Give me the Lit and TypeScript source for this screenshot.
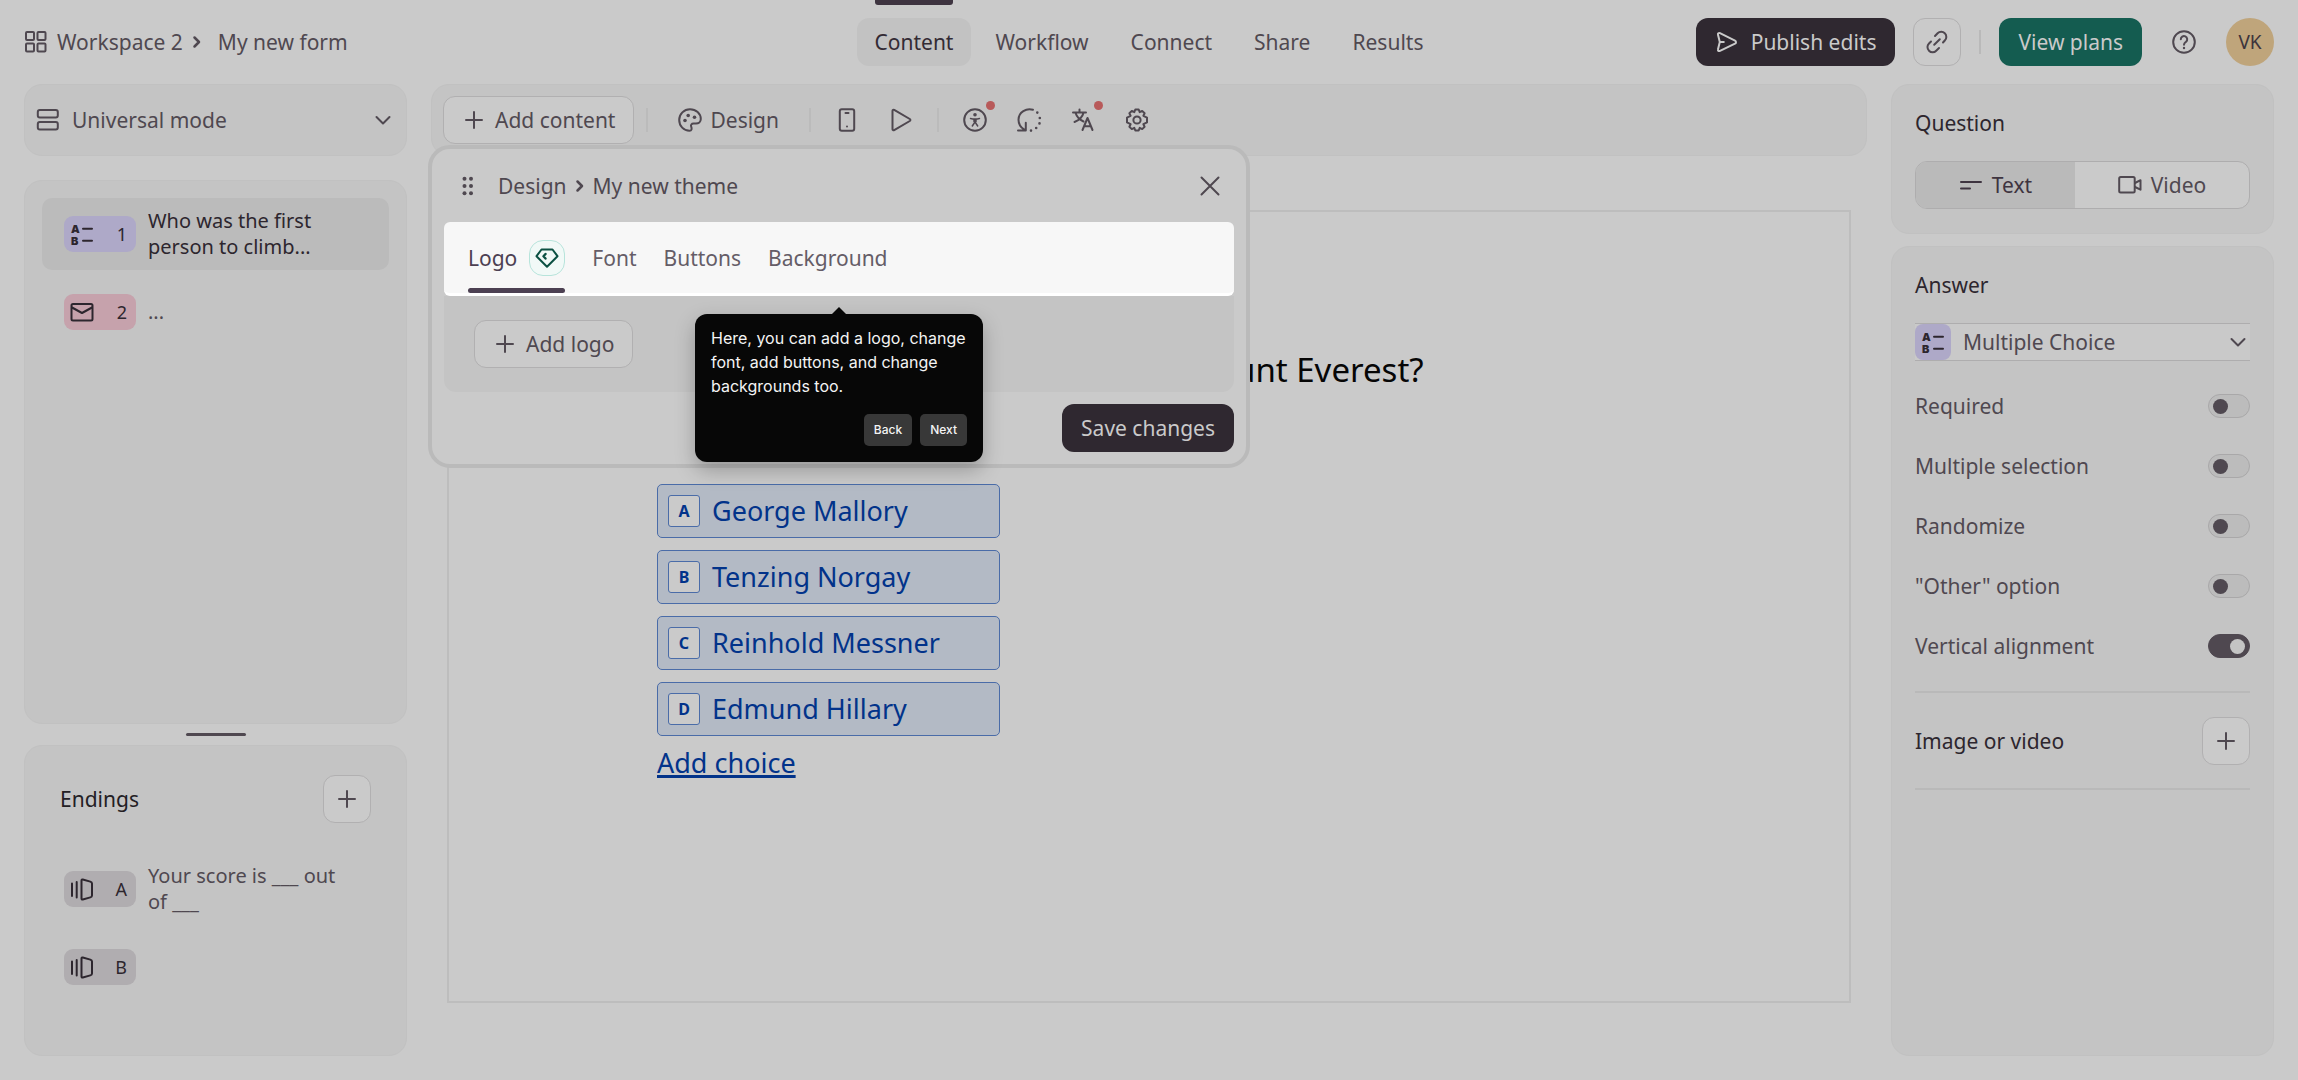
import { LitElement, html, css, svg, nothing, TemplateResult } from "lit";
import { customElement, property, state } from "lit/decorators.js";
import { classMap } from "lit/directives/class-map.js";

const icons: Record<string, TemplateResult> = {
  grid: svg`<rect x="2" y="2" width="8" height="8" rx="1"/><rect x="13.500" y="2" width="8" height="8" rx="1"/><rect x="2" y="13.500" width="8" height="8" rx="1"/><rect x="13.500" y="13.500" width="8" height="8" rx="1"/>`,
  chevronRight: svg`<path d="M9.500 7.500l4.500 4.500-4.500 4.500" stroke-width="2.500"/>`,
  chevronDown: svg`<path d="M5.500 9l6.500 6.500L18.500 9"/>`,
  rows: svg`<rect x="1.800" y="2" width="20" height="7.500" rx="2"/><rect x="1.800" y="14" width="20" height="7.500" rx="2"/>`,
  plus: svg`<path d="M12 4v16M4 12h16"/>`,
  palette: svg`<path d="M12 1.200c6 0 10.800 4.200 10.800 9.800 0 3-2.300 4.500-4.800 4.500h-2.500c-2 0-3 1.500-2.300 3.200.8 1.900.6 4.100-1.700 4.100C5.800 22.800 1.200 18 1.200 12S6 1.200 12 1.200z"/><g fill="currentColor" stroke="none"><circle cx="7" cy="12.500" r="1.800"/><circle cx="10.200" cy="7.500" r="1.800"/><circle cx="16.500" cy="9.200" r="1.800"/></g>`,
  phone: svg`<rect x="4.800" y="1.200" width="14.400" height="21.600" rx="2"/><path d="M10.500 5h3"/><path d="M12 18.500v.01"/>`,
  play: svg`<path d="M3.500 2.800v18.400c0 .9.900 1.400 1.700 1l15.600-9.200c.8-.5.8-1.500 0-2L5.200 1.800c-.8-.4-1.700.1-1.700 1z"/>`,
  access: svg`<circle cx="12" cy="12" r="10.800"/><circle cx="12" cy="6.800" r="1.800" fill="currentColor" stroke="none"/><path d="M7.500 10.500c3 .7 6 .7 9 0M12 11v3.500M12 14l-2.700 4M12 14l2.700 4M11 11.500h2v2h-2z" stroke-width="1.500"/>`,
  loop: svg`<path d="M16 1.800C9.500-.3 1.500 4 1.500 11.800c0 4.200 2.200 7.700 5.800 9.900M1 22.500h7.800v-7.800"/><path d="M20.300 4.600v.01M22.800 10v.01M22.500 15.400v.01M19.200 20v.01M14 22.600v.01" stroke-width="2.600"/>`,
  translate: svg`<path d="M2 4.500h13M8.500 1.500v3M4.500 4.800c1.200 4 4.200 7 8 8.700M12.500 4.800c-1 4.200-4.300 7.400-9 9.200"/><path d="M11.500 22l5-12 5 12M13.300 18.300h6.500"/>`,
  gear: svg`<circle cx="12" cy="12" r="3.600"/><path d="M10.300 1.500h3.400l1 2.600 2.500-1.200 2.400 2.400-1.200 2.500 3.600 1.800v4.800l-3.600 1.800 1.200 2.500-2.400 2.400-2.500-1.200-1 2.600h-3.400l-1-2.600-2.500 1.200-2.400-2.400 1.200-2.500L2 14.400V9.600l3.600-1.800-1.200-2.500 2.400-2.400 2.500 1.200z"/>`,
  send: svg`<path d="M3 4.800c-.4-1.400.7-2.200 2-1.600l15 7.500c1.300.7 1.300 2.300 0 3L5 20.900c-1.300.6-2.400-.2-2-1.600L4.800 12zM4.800 12h4"/>`,
  link: svg`<path d="M9.200 14.800l5.600-5.600M10 6l2.600-2.700a5 5 0 0 1 7.200 0 5 5 0 0 1 0 7.200L18 12.500M6 11.500l-2 2a5 5 0 0 0 0 7.200 5 5 0 0 0 7.200 0L14 18"/>`,
  help: svg`<circle cx="12" cy="12" r="10.800"/><path d="M8.800 9.300a3.200 3.200 0 1 1 5.300 2.400c-1.200 1-2.100 1.500-2.100 3.100"/><path d="M12 18v.01" stroke-width="2.400"/>`,
  lines: svg`<path d="M2 9h20M2 15.500h9"/>`,
  video: svg`<rect x="1.200" y="4" width="15.500" height="15.500" rx="1.500"/><path d="M17 10l5.500-2.800v9.500L17 14"/>`,
  close: svg`<path d="M3.500 3.500l17 17M20.500 3.500l-17 17"/>`,
  drag: svg`<g fill="currentColor" stroke="none"><circle cx="8.500" cy="4.800" r="2"/><circle cx="15" cy="4.800" r="2"/><circle cx="8.500" cy="12" r="2"/><circle cx="15" cy="12" r="2"/><circle cx="8.500" cy="19.200" r="2"/><circle cx="15" cy="19.200" r="2"/></g>`,
  gem: svg`<path d="M6.500 3.500h11l5 6.700L12 20.800 1.500 10.200z"/><path d="M10.500 8l-2 2.300 2 2.200" stroke-width="2.400"/>`,
  mail: svg`<rect x="1.500" y="4" width="21" height="16.500" rx="1.500"/><path d="M2 7.500l10 5.500 10-5.500"/>`,
  choice: svg`<g fill="currentColor" stroke="none" font-family="Inter, sans-serif" font-weight="900" font-size="11"><text x="1" y="10.500">A</text><text x="1" y="22.500">B</text></g><path d="M13 6.800h9M13 18.800h9"/>`,
  ending: svg`<path d="M2 6.500v12.500M6.700 5v15.500M11.500 3.500v18c0 .8.500 1.200 1.300 1l7.500-2.100c1-.3 1.700-.9 1.700-2V6.600c0-1.100-.7-1.700-1.700-2l-7.500-2.100c-.8-.2-1.300.2-1.300 1z"/>`,
};

const icon = (name: string) =>
  html`<svg class="icon" viewBox="0 0 24 24" aria-hidden="true">${icons[name]}</svg>`;

const shared = css`
  :host {
    display: block;
    font-family: "Noto Sans", sans-serif;
    font-size: 21px;
    line-height: 28px;
    color: #4f4850;
  }
  *, *::before, *::after { box-sizing: border-box; }
  button, input, select { font: inherit; color: inherit; margin: 0; }
  button { cursor: pointer; background: none; border: 0; padding: 0; }
  a { color: inherit; text-decoration: none; }
  h1, h2, p, ul { margin: 0; padding: 0; font-weight: 400; font-size: inherit; }
  ul { list-style: none; }
  .icon {
    flex: none;
    width: 24px;
    height: 24px;
    fill: none;
    stroke: currentColor;
    stroke-width: 2;
    stroke-linecap: round;
    stroke-linejoin: round;
    overflow: visible;
  }
  .panel { background: #c4c4c4; border: 1px solid #c1c1c1; border-radius: 18px; }
  .outlined {
    display: flex;
    align-items: center;
    justify-content: center;
    height: 48px;
    color: #4f4850;
    background: #cacaca;
    border: 1px solid #b1b0b1;
    border-radius: 12px;
  }
  .square { width: 48px; flex: none; }
  .labelled { gap: 9px; padding: 0 18px; }
  .solid {
    display: flex;
    align-items: center;
    gap: 12px;
    height: 48px;
    padding: 0 19px;
    border-radius: 12px;
    background: #2f2830;
    color: #cacaca;
  }
  .rule { flex: none; width: 2px; height: 24px; background: #b9b9b9; }
  .select-wrap { display: grid; flex: 1; align-items: center; }
  .select-wrap > * { grid-area: 1 / 1; }
  .select-wrap .icon { justify-self: end; pointer-events: none; }
  .select-wrap select {
    appearance: none;
    width: 100%;
    height: 36px;
    padding: 0;
    border: 0;
    background: transparent;
  }
`;

@customElement("app-header")
class AppHeader extends LitElement {
  static styles = [shared, css`
    .bar {
      display: grid;
      grid-template-columns: 1fr auto 1fr;
      align-items: center;
      height: 84px;
      padding: 0 24px;
    }
    .crumbs, .actions, .tabs { display: flex; align-items: center; }
    .crumbs { gap: 2px; }
    .crumbs a { display: flex; align-items: center; gap: 9px; }
    .crumbs .current { margin-left: 7px; }
    .tabs { gap: 6px; height: 84px; }
    .tab {
      position: relative;
      display: flex;
      align-items: center;
      height: 48px;
      padding: 0 18px;
      border-radius: 12px;
    }
    .tab.active { background: #c2c2c2; color: #332b34; }
    .tab.active::before {
      content: "";
      position: absolute;
      left: 18px;
      right: 18px;
      top: -18px;
      height: 5px;
      border-radius: 0 0 3px 3px;
      background: #3e3440;
    }
    .actions { justify-content: flex-end; gap: 18px; }
    .green { background: #145c50; }
    .help { display: grid; place-items: center; width: 48px; height: 48px; }
    .avatar {
      width: 48px;
      height: 48px;
      border-radius: 50%;
      background: #bfa57b;
      color: #3c343c;
      font-size: 19px;
    }
  `];

  render() {
    return html`
      <header class="bar">
        <div class="crumbs">
          <a href="#workspace">${icon("grid")}Workspace 2</a>
          ${icon("chevronRight")}
          <a class="current" href="#form">My new form</a>
        </div>
        <nav class="tabs" aria-label="Form sections">
          ${["Content", "Workflow", "Connect", "Share", "Results"].map(
            (name, i) => html`<a class=${classMap({ tab: true, active: i === 0 })} href="#${name.toLowerCase()}">${name}</a>`
          )}
        </nav>
        <div class="actions">
          <button class="solid">${icon("send")}Publish edits</button>
          <button class="outlined square" aria-label="Copy link">${icon("link")}</button>
          <span class="rule"></span>
          <button class="solid green">View plans</button>
          <button class="help" aria-label="Help">${icon("help")}</button>
          <button class="avatar">VK</button>
        </div>
      </header>
    `;
  }
}

interface Item { icon: string; tone: string; mark: string; text: string; active?: boolean }

@customElement("content-sidebar")
class ContentSidebar extends LitElement {
  static styles = [shared, css`
    :host { display: flex; flex-direction: column; }
    .mode {
      display: flex;
      align-items: center;
      gap: 12px;
      height: 72px;
      padding: 0 11px;
      margin-bottom: 24px;
    }
    .list { flex: 1; padding: 17px; min-height: 240px; }
    .grip { align-self: center; width: 60px; height: 3px; margin: 9px 0; border-radius: 2px; background: #4f4850; }
    .endings { padding: 29px 17px 17px; min-height: 311px; }
    .head { display: flex; align-items: center; justify-content: space-between; padding: 0 18px; margin-bottom: 30px; color: #232024; }
    .items { display: flex; flex-direction: column; gap: 6px; }
    .item {
      display: flex;
      align-items: center;
      gap: 12px;
      width: 100%;
      height: 72px;
      padding: 0 40px 0 22px;
      border-radius: 10px;
      font-size: 20px;
      line-height: 26px;
      text-align: left;
    }
    .item.active { background: #bbbbbb; color: #2d262e; }
    .badge {
      flex: none;
      display: flex;
      align-items: center;
      justify-content: space-between;
      width: 72px;
      height: 36px;
      padding: 0 9px 0 6px;
      border-radius: 9px;
      color: #2d262e;
      font-size: 18px;
    }
    .purple { background: #aea9c8; }
    .pink { background: #c6a2ac; }
    .gray { background: #b0adb0; }
  `];

  items: Item[] = [
    { icon: "choice", tone: "purple", mark: "1", text: "Who was the first person to climb...", active: true },
    { icon: "mail", tone: "pink", mark: "2", text: "..." },
  ];
  endings: Item[] = [
    { icon: "ending", tone: "gray", mark: "A", text: "Your score is ___ out of ___" },
    { icon: "ending", tone: "gray", mark: "B", text: "" },
  ];

  private row(i: Item) {
    return html`
      <li>
        <button class=${classMap({ item: true, active: !!i.active })}>
          <span class="badge ${i.tone}">${icon(i.icon)}<span>${i.mark}</span></span>
          ${i.text ? html`<span>${i.text}</span>` : nothing}
        </button>
      </li>`;
  }

  render() {
    return html`
      <div class="panel mode">
        ${icon("rows")}
        <div class="select-wrap">
          <select aria-label="Mode"><option>Universal mode</option></select>
          ${icon("chevronDown")}
        </div>
      </div>
      <section class="panel list"><ul class="items">${this.items.map((i) => this.row(i))}</ul></section>
      <div class="grip"></div>
      <section class="panel endings">
        <div class="head">
          <h2>Endings</h2>
          <button class="outlined square" aria-label="Add ending">${icon("plus")}</button>
        </div>
        <ul class="items">${this.endings.map((i) => this.row(i))}</ul>
      </section>
    `;
  }
}

@customElement("design-toolbar")
class DesignToolbar extends LitElement {
  static styles = [shared, css`
    .bar { display: flex; align-items: center; gap: 12px; height: 72px; padding: 0 11px; }
    .bar .rule { background: #bbbbbb; }
    .group { display: flex; gap: 6px; }
    .design { display: flex; align-items: center; gap: 8px; height: 48px; padding: 0 18px; }
    .tool { position: relative; display: grid; place-items: center; width: 48px; height: 48px; }
    .tool.alert::after {
      content: "";
      position: absolute;
      top: 5px;
      right: 4px;
      width: 9px;
      height: 9px;
      border-radius: 50%;
      background: #b85a5a;
    }
  `];

  private tool(name: string, label: string, alert = false) {
    return html`<button class=${classMap({ tool: true, alert })} aria-label=${label}>${icon(name)}</button>`;
  }

  render() {
    return html`
      <div class="panel bar">
        <button class="outlined labelled">${icon("plus")}Add content</button>
        <span class="rule"></span>
        <button class="design">${icon("palette")}Design</button>
        <span class="rule"></span>
        <div class="group">${this.tool("phone", "Mobile view")}${this.tool("play", "Preview")}</div>
        <span class="rule"></span>
        <div class="group">
          ${this.tool("access", "Accessibility", true)}
          ${this.tool("loop", "Recall")}
          ${this.tool("translate", "Languages", true)}
          ${this.tool("gear", "Settings")}
        </div>
      </div>
    `;
  }
}

@customElement("form-canvas")
class FormCanvas extends LitElement {
  static styles = [shared, css`
    :host { display: flex; flex-direction: column; border: 2px solid #bdbdbd; }
    .content { width: 100%; max-width: 984px; margin: 0 auto; padding: 134px 0 48px; }
    .title { margin-bottom: 90px; font-size: 33px; line-height: 48px; color: #060606; white-space: nowrap; }
    .choices { display: flex; flex-direction: column; align-items: flex-start; gap: 12px; color: #02338a; font-size: 27px; line-height: 36px; }
    .choice {
      display: flex;
      align-items: center;
      gap: 12px;
      width: 343px;
      height: 54px;
      padding: 0 10px;
      background: #b3bac5;
      border: 1px solid #4a6ca8;
      border-radius: 5px;
      text-align: left;
    }
    .key {
      display: grid;
      place-items: center;
      width: 32px;
      height: 32px;
      background: #cacaca;
      border: 1px solid #4a6ca8;
      border-radius: 3px;
      font-size: 16px;
      line-height: 24px;
      font-weight: 700;
    }
    .add { margin-top: -3px; text-decoration: underline; text-decoration-thickness: 3px; text-underline-offset: 2px; }
  `];

  choices = ["George Mallory", "Tenzing Norgay", "Reinhold Messner", "Edmund Hillary"];

  render() {
    return html`
      <div class="content">
        <h1 class="title">Who was the first person to climb Mount Everest?</h1>
        <div class="choices">
          ${this.choices.map(
            (name, i) => html`<button class="choice"><span class="key">${"ABCD"[i]}</span><span>${name}</span></button>`
          )}
          <button class="add">Add choice</button>
        </div>
      </div>
    `;
  }
}

@customElement("design-dialog")
class DesignDialog extends LitElement {
  static styles = [shared, css`
    .dialog { padding: 0 12px 12px; background: #cacaca; border: 4px solid #bababa; border-radius: 22px; }
    .head { display: flex; align-items: center; height: 73px; padding: 0 12px; }
    .head button { display: flex; }
    .name { display: flex; align-items: center; gap: 1px; flex: 1; padding-left: 18px; }
    .tabs {
      display: flex;
      gap: 27px;
      height: 74px;
      padding: 0 24px;
      background: #f7f7f7;
      border-bottom: 3px solid #ffffff;
      border-radius: 6px;
      color: #655d67;
    }
    .tab { position: relative; display: flex; align-items: center; gap: 12px; }
    .tab.active { color: #4c4052; }
    .tab.active::after {
      content: "";
      position: absolute;
      left: 0;
      right: 0;
      bottom: 0;
      height: 5px;
      border-radius: 3px;
      background: #4c4052;
    }
    .gem {
      display: grid;
      place-items: center;
      width: 36px;
      height: 36px;
      border: 1px solid #b7e4db;
      border-radius: 14px;
      background: #f1f9f7;
      color: #0c5143;
    }
    .body { display: flex; padding: 24px 30px; background: #c4c4c4; border-radius: 0 0 12px 12px; }
    .foot { display: flex; justify-content: flex-end; padding-top: 12px; }
    .tip {
      position: absolute;
      left: 267px;
      top: 169px;
      width: 288px;
      padding: 12px 16px 16px;
      border-radius: 12px;
      background: #070707;
      color: #f4f4f4;
      font-family: Inter, sans-serif;
      font-size: 16px;
      line-height: 24px;
      box-shadow: 0 8px 20px rgba(0, 0, 0, 0.25);
    }
    .tip::before {
      content: "";
      position: absolute;
      left: 137px;
      top: -7px;
      border: 7px solid transparent;
      border-top: 0;
      border-bottom-color: #070707;
    }
    .tip-actions { display: flex; justify-content: flex-end; gap: 8px; margin-top: 16px; }
    .tip-actions button { height: 32px; padding: 0 10px; border-radius: 5px; background: #383838; font-size: 12px; font-weight: 500; }
  `];

  render() {
    return html`
      <section class="dialog" role="dialog" aria-label="Design">
        <div class="head">
          <button aria-label="Move panel">${icon("drag")}</button>
          <div class="name"><a href="#design">Design</a>${icon("chevronRight")}<span>My new theme</span></div>
          <button aria-label="Close">${icon("close")}</button>
        </div>
        <div class="tabs" role="tablist">
          <button class="tab active" role="tab" aria-selected="true">Logo<span class="gem">${icon("gem")}</span></button>
          <button class="tab" role="tab">Font</button>
          <button class="tab" role="tab">Buttons</button>
          <button class="tab" role="tab">Background</button>
        </div>
        <div class="body"><button class="outlined labelled">${icon("plus")}Add logo</button></div>
        <div class="foot"><button class="solid">Save changes</button></div>
      </section>
      <aside class="tip">
        <p>Here, you can add a logo, change font, add buttons, and change backgrounds too.</p>
        <div class="tip-actions"><button>Back</button><button>Next</button></div>
      </aside>
    `;
  }
}

@customElement("question-settings")
class QuestionSettings extends LitElement {
  static styles = [shared, css`
    :host { display: flex; flex-direction: column; gap: 12px; }
    .panel { padding: 24px 23px; }
    .grow { flex: 1; }
    h2 { color: #2d262e; }
    .segments { display: flex; height: 48px; margin-top: 24px; border: 1px solid #aeadae; border-radius: 12px; overflow: hidden; background: #cacaca; }
    .segment { flex: 1 1 auto; display: flex; align-items: center; justify-content: center; gap: 9px; }
    .segment.on { background: #bababa; color: #3e3440; }
    .type { display: flex; align-items: center; gap: 12px; margin: 24px 0 22px; background: #c9c9c9; border-top: 1px solid #aeadae; border-bottom: 1px solid #aeadae; height: 38px; }
    .type-icon { display: grid; place-items: center; width: 36px; height: 36px; border-radius: 8px; background: #aea9c8; color: #2d262e; }
    .option { display: flex; align-items: center; justify-content: space-between; height: 60px; padding-bottom: 16px; }
    .options { padding: 1px 0 7px; }
    .switch {
      appearance: none;
      flex: none;
      display: flex;
      align-items: center;
      width: 42px;
      height: 24px;
      padding: 0 4px;
      border: 1px solid #a9a8a9;
      border-radius: 12px;
      background: #bcbcbc;
      cursor: pointer;
    }
    .switch::before { content: ""; width: 15px; height: 15px; border-radius: 50%; background: #4f4850; }
    .switch:checked { background: #4f4850; border-color: #4f4850; justify-content: flex-end; }
    .switch:checked::before { background: #c4c4c4; }
    .media { display: flex; align-items: center; justify-content: space-between; height: 99px; border: 2px solid #b9b9b9; border-left: 0; border-right: 0; }
  `];

  @property({ attribute: false }) options = [
    { id: "required", label: "Required", on: false },
    { id: "multiple", label: "Multiple selection", on: false },
    { id: "randomize", label: "Randomize", on: false },
    { id: "other", label: '"Other" option', on: false },
    { id: "vertical", label: "Vertical alignment", on: true },
  ];
  @state() mode = "Text";

  private segment(name: string, glyph: string) {
    return html`<button
      class=${classMap({ segment: true, on: this.mode === name })}
      aria-pressed=${this.mode === name ? "true" : "false"}
      @click=${() => (this.mode = name)}
    >${icon(glyph)}${name}</button>`;
  }

  render() {
    return html`
      <section class="panel">
        <h2>Question</h2>
        <div class="segments">${this.segment("Text", "lines")}${this.segment("Video", "video")}</div>
      </section>
      <section class="panel grow">
        <h2>Answer</h2>
        <div class="type">
          <span class="type-icon">${icon("choice")}</span>
          <div class="select-wrap">
            <select aria-label="Answer type"><option>Multiple Choice</option></select>
            ${icon("chevronDown")}
          </div>
        </div>
        <div class="options">
          ${this.options.map(
            (o) => html`<div class="option">
              <label for=${o.id}>${o.label}</label>
              <input class="switch" type="checkbox" id=${o.id} .checked=${o.on} />
            </div>`
          )}
        </div>
        <div class="media">
          <h2>Image or video</h2>
          <button class="outlined square" aria-label="Add image or video">${icon("plus")}</button>
        </div>
      </section>
    `;
  }
}

@customElement("app-root")
class AppRoot extends LitElement {
  static styles = [shared, css`
    :host { background: #cacaca; }
    .page { display: flex; flex-direction: column; min-height: 100vh; }
    .main {
      flex: 1;
      display: grid;
      grid-template-columns: 383px minmax(0, 1fr) 383px;
      gap: 24px;
      padding: 0 24px 24px;
    }
    .stage { position: relative; display: flex; flex-direction: column; }
    .canvas { flex: 1; margin: 54px 16px 53px; }
    .floating { position: absolute; left: -3px; top: 61px; width: 822px; max-width: 100%; }
  `];

  render() {
    return html`
      <div class="page">
        <app-header></app-header>
        <main class="main">
          <content-sidebar></content-sidebar>
          <div class="stage">
            <design-toolbar></design-toolbar>
            <form-canvas class="canvas"></form-canvas>
            <design-dialog class="floating"></design-dialog>
          </div>
          <question-settings></question-settings>
        </main>
      </div>
    `;
  }
}
